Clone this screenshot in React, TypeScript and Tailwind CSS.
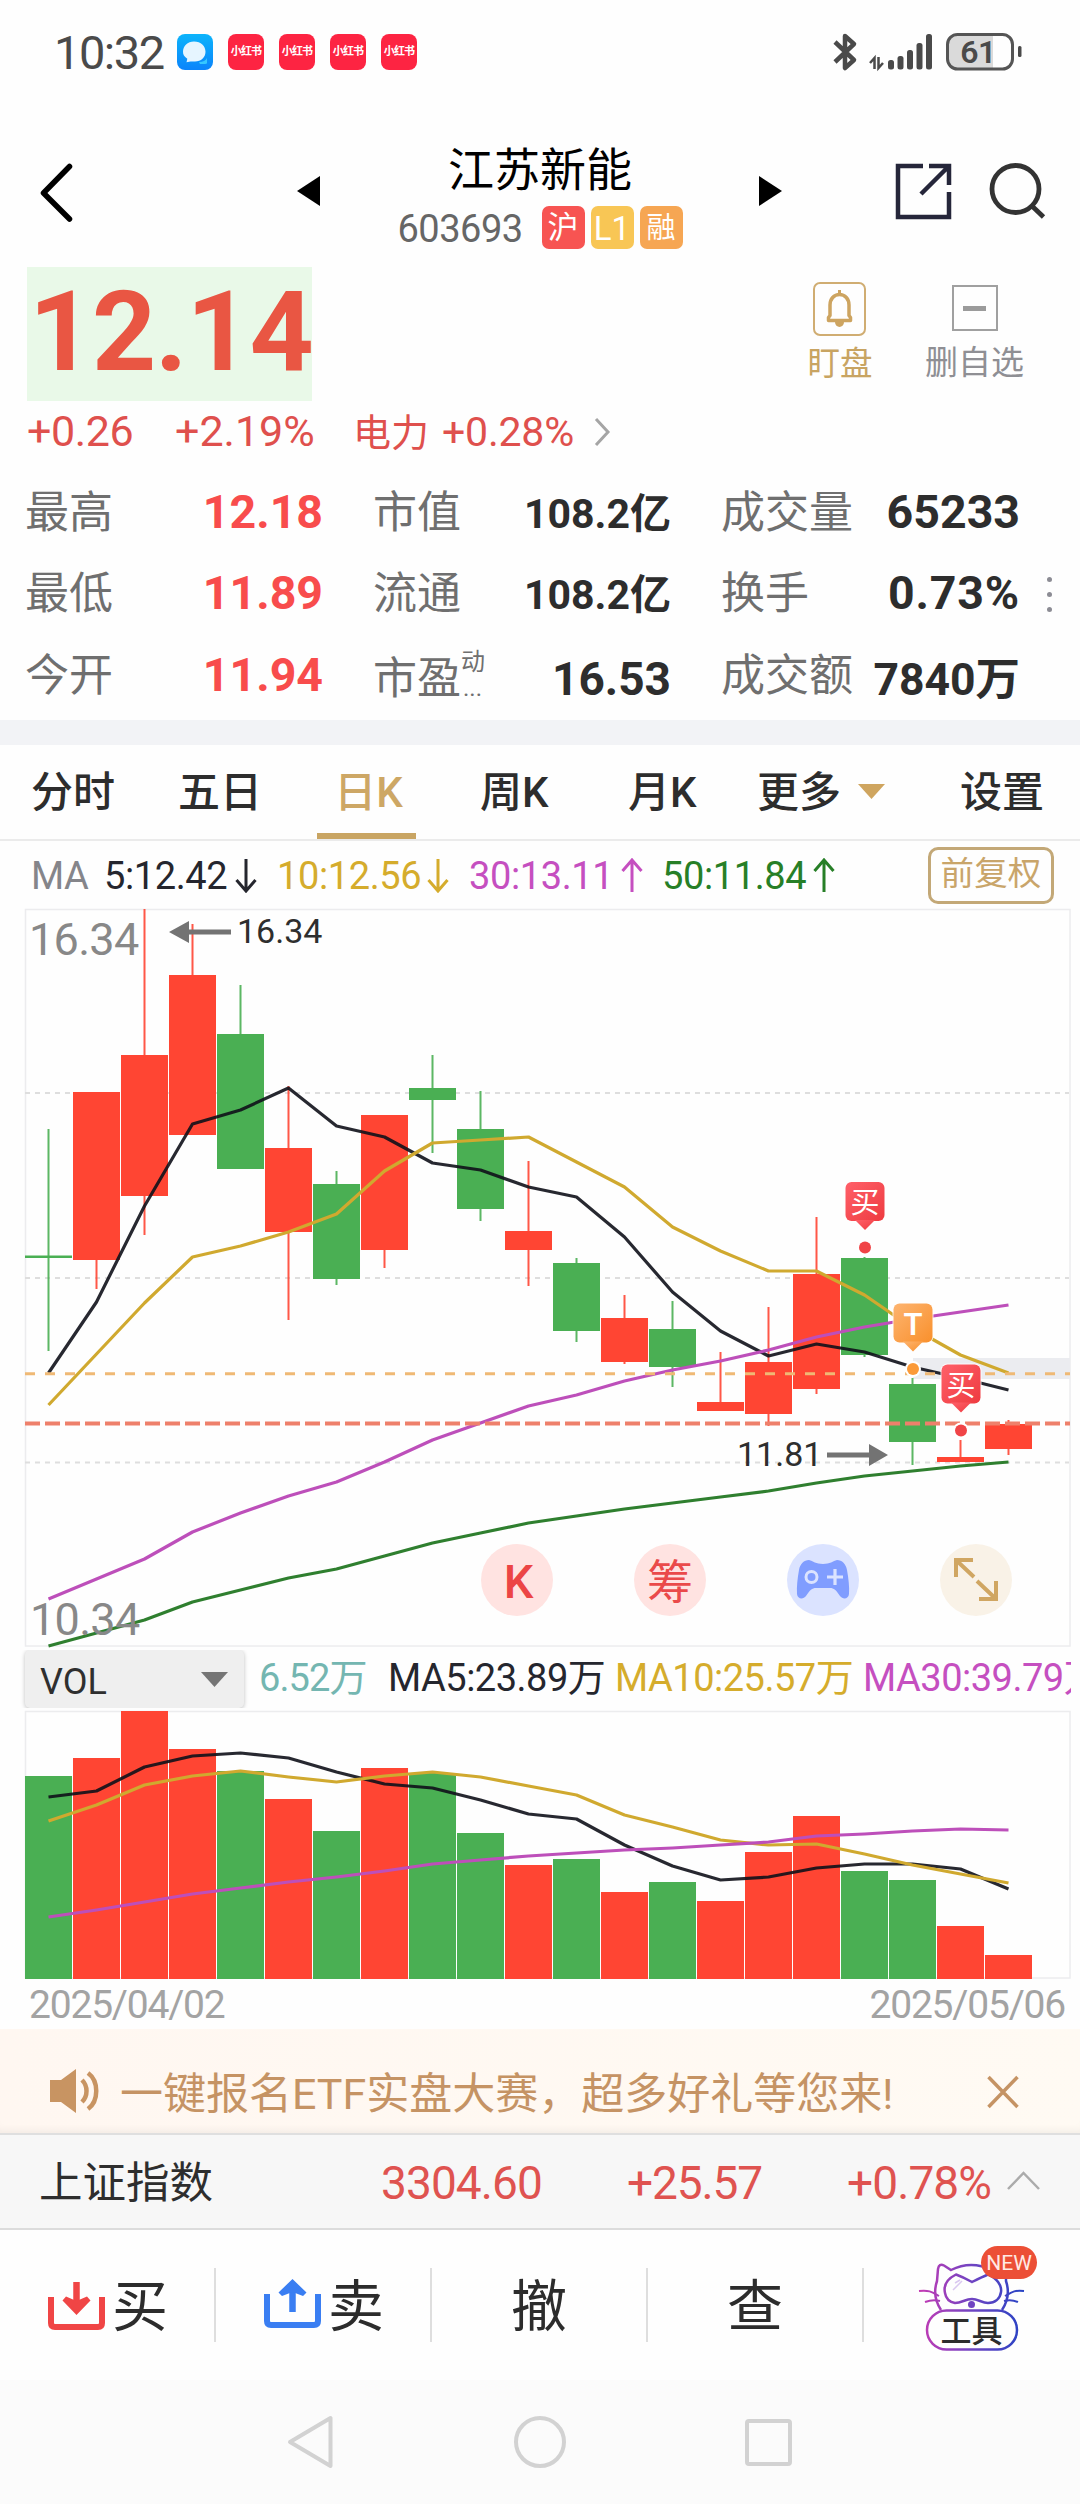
import React from "react";

const RED = "#ff4533";
const GREEN = "#4aaf53";

/* [rising, body top, body bottom, high, low] */
const candles: [boolean, number, number, number, number][] = [
  [false, 1255.5, 1258, 1129, 1351],
  [true, 1092, 1260, 1092, 1289],
  [true, 1055, 1196, 909, 1235],
  [true, 975, 1135, 924, 1135],
  [false, 1034, 1169, 985, 1169],
  [true, 1148, 1232, 1086, 1320],
  [false, 1184, 1279, 1171, 1285],
  [true, 1115, 1250, 1115, 1268],
  [false, 1088, 1100, 1055, 1153],
  [false, 1129, 1209, 1091, 1221],
  [true, 1231, 1250, 1161, 1286],
  [false, 1263, 1331, 1258, 1342],
  [true, 1318, 1362, 1295, 1364],
  [false, 1329, 1367, 1301, 1387],
  [true, 1402, 1411, 1352, 1411],
  [true, 1362, 1414, 1307, 1426],
  [true, 1274, 1389, 1217, 1394],
  [false, 1258, 1355, 1257, 1357],
  [false, 1384, 1442, 1378, 1465],
  [true, 1457, 1462, 1440, 1462],
  [true, 1424, 1449, 1420, 1455],
];
const ma5 = [1373, 1302, 1206, 1124, 1110, 1088, 1126, 1137, 1163, 1170, 1187, 1197, 1237, 1292, 1331, 1356, 1344, 1352, 1367, 1378, 1390];
const ma10 = [1405, 1354, 1303, 1257, 1246, 1232, 1214, 1171, 1143, 1140, 1137, 1162, 1187, 1227, 1251, 1271, 1271, 1295, 1328, 1355, 1373];
const ma30 = [1599, 1579, 1559, 1532, 1513, 1496, 1482, 1462, 1440, 1423, 1406, 1395, 1381, 1370, 1361, 1350, 1337, 1327, 1319, 1312, 1305];
const ma50 = [1646, 1633, 1620, 1602, 1590, 1578, 1569, 1556, 1543, 1533, 1523, 1516, 1509, 1503, 1497, 1491, 1483, 1476, 1471, 1466, 1462];
const volTop = [1776, 1758, 1711, 1749, 1771, 1799, 1831, 1768, 1773, 1833, 1865, 1859, 1892, 1882, 1901, 1852, 1816, 1871, 1880, 1926, 1955];
const v5 = [1797, 1791, 1767, 1756, 1753, 1758, 1772, 1784, 1788, 1800, 1814, 1819, 1845, 1866, 1880, 1877, 1868, 1864, 1864, 1869, 1889];
const v10 = [1821, 1805, 1785, 1776, 1771, 1777, 1782, 1776, 1772, 1777, 1786, 1795, 1815, 1827, 1840, 1845, 1844, 1854, 1865, 1874, 1883];
const v30 = [1917, 1910, 1902, 1894, 1888, 1882, 1877, 1871, 1864, 1860, 1856, 1853, 1850, 1848, 1845, 1842, 1836, 1834, 1831, 1829, 1830];

const toPoints = (ys: number[]) => ys.map((y, i) => `${48.5 + 48 * i},${y}`).join(" ");

function Line({ ys, color }: { ys: number[]; color: string }) {
  return <polyline points={toPoints(ys)} fill="none" stroke={color} strokeWidth={3.2} strokeLinejoin="round" />;
}

function Marker({ x, top, label, dotY, kind }: { x: number; top: number; label: string; dotY: number; kind: "buy" | "t" }) {
  const fill = kind === "buy" ? "url(#buyFill)" : "url(#tFill)";
  const dot = kind === "buy" ? "#f04447" : "#fb9a38";
  return (
    <g>
      <circle cx={x} cy={dotY} r={8} fill="#fff" />
      <circle cx={x} cy={dotY} r={6} fill={dot} />
      <rect x={x - 20.5} y={top - 1} width={41} height={41} rx={7} fill="#fff" opacity={0.8} />
      <rect x={x - 19.5} y={top} width={39} height={39} rx={6} fill={fill} />
      <path d={`M${x - 10} ${top + 38}L${x} ${top + 48}L${x + 10} ${top + 38}Z`} fill={fill} />
      <text x={x} y={top + 31} textAnchor="middle" fontSize={kind === "buy" ? 29 : 31} fontWeight={kind === "buy" ? 400 : 600} fill="#fff">
        {label}
      </text>
    </g>
  );
}

function StatusBar() {
  return (
    <div className="flex h-[104px] shrink-0 items-start pl-[54px]">
      <div className="w-[123px] pt-[29px] text-[47px] leading-[48px] tracking-[-1.5px] text-[#4a4a4a]">10:32</div>
      <div className="flex gap-[15px] pt-[34px]">
        <svg width="36" height="36" viewBox="0 0 36 36">
          <defs>
            <linearGradient id="msg" x1="0" y1="0" x2="0" y2="1">
              <stop offset="0" stopColor="#0cb4fb" />
              <stop offset="1" stopColor="#0b84fb" />
            </linearGradient>
          </defs>
          <rect width="36" height="36" rx="8" fill="url(#msg)" />
          <path d="M22 28q6 0 8-4v5q0 1-2 1h-5z" fill="#36c8ff" />
          <path d="M17 7.500c7 0 11.500 4.500 11.500 10.300S24 27.500 18 27.500h-4.500l-4 .8.800-3.500C7 22.500 6 20.500 6 17.800 6 12 10.500 7.500 17 7.500z" fill="#e6f5ff" />
        </svg>
        {[0, 1, 2, 3].map((i) => (
          <div key={i} className="flex h-[36px] w-[36px] items-center justify-center rounded-[8px] bg-[#fd2442] text-[11px] leading-[36px] font-bold tracking-[-0.8px] whitespace-nowrap text-white">
            小红书
          </div>
        ))}
      </div>
      <svg className="mt-[30px] ml-[412px]" width="194" height="44" viewBox="829 30 194 44">
        <path d="M835 42L854 60L845 68V36L854 44L835 62" fill="none" stroke="#4a4a4a" strokeWidth="4.500" strokeLinejoin="round" />
        <path d="M870 63l4.500-5v11M883 63l-4.500 5v-11" fill="none" stroke="#4a4a4a" strokeWidth="2.500" />
        <g fill="#4a4a4a">
          <rect x="888" y="60" width="6" height="9.500" rx="2.500" />
          <rect x="897.500" y="56" width="6" height="13.500" rx="2.500" />
          <rect x="907" y="50" width="6" height="19.500" rx="2.500" />
          <rect x="916.500" y="43" width="6" height="26.500" rx="2.500" />
          <rect x="926" y="34" width="6" height="35.500" rx="2.500" />
          <rect x="1018" y="46" width="3.500" height="11" rx="1.500" />
        </g>
        <path d="M957 34.500h36v34h-36a9.500 9.500 0 0 1-9.500-9.500v-15a9.500 9.500 0 0 1 9.500-9.500z" fill="#dadada" />
        <rect x="947.500" y="34.500" width="65" height="34.500" rx="10" fill="none" stroke="#555" strokeWidth="3" />
        <text x="978" y="63" textAnchor="middle" fontSize="32" fontWeight="600" letterSpacing="-0.500" fill="#4a4a4a">61</text>
      </svg>
    </div>
  );
}

function Header() {
  return (
    <div className="flex h-[163px] shrink-0 items-start">
      <svg className="mt-[56px] ml-[36px]" width="40" height="64" viewBox="36 160 40 64">
        <path d="M69.500 166.500L43.500 193L69.500 219" fill="none" stroke="#000" strokeWidth="5.500" strokeLinecap="round" strokeLinejoin="round" />
      </svg>
      <svg className="mt-[72px] ml-[221px]" width="23" height="30" viewBox="0 0 23 30"><path d="M0 15L23 0V30Z" /></svg>
      <div className="ml-[60px] flex w-[320px] flex-col items-center">
        <div className="mt-[38px] text-[46px] leading-[56px] text-black">江苏新能</div>
        <div className="mt-[8px] flex h-[43px] items-center gap-[6px]">
          <div className="mt-[3px] w-[138px] text-[38px] leading-[42px] tracking-[-0.5px] text-[#666]">603693</div>
          <div className="h-[43px] w-[43px] rounded-[7px] bg-[#f75452] text-center text-[31px] leading-[44px] text-white">沪</div>
          <div className="h-[43px] w-[43px] rounded-[7px] bg-[#f8c655] text-center text-[33px] leading-[45px] text-white">L1</div>
          <div className="h-[43px] w-[43px] rounded-[7px] bg-[#f6a653] text-center text-[29px] leading-[45px] text-white">融</div>
        </div>
      </div>
      <svg className="mt-[72px] ml-[59px]" width="23" height="30" viewBox="0 0 23 30"><path d="M23 15L0 0V30Z" /></svg>
      <svg className="mt-[56px] ml-[110px]" width="158" height="62" viewBox="892 160 158 62">
        <g fill="none" stroke="#25263a" strokeWidth="4.500">
          <path d="M923 166H898V217H949V192" />
          <path d="M929 166H949V185M949 166L921 194" />
        </g>
        <g fill="none" stroke="#333" strokeWidth="4.800">
          <circle cx="1015.500" cy="189" r="23.500" />
          <path d="M1032 206L1043.500 217" />
        </g>
      </svg>
    </div>
  );
}

function Quote() {
  return (
    <div className="flex h-[134px] shrink-0 items-start pl-[27px]">
      <div className="h-[134px] w-[285px] bg-[#e9f9e8] pl-[2px] text-[112px] leading-[129px] font-bold tracking-[-1.2px] text-[#e95643]">12.14</div>
      <div className="mt-[15px] ml-[489px] flex w-[77px] flex-col items-center">
        <svg width="53" height="54" viewBox="0 0 53 54">
          <rect x="1" y="1" width="51" height="52" rx="6" fill="none" stroke="#d0ad72" strokeWidth="2" />
          <path d="M15.500 38.500v-3l1.500-2V23c0-6 4-10.500 9.500-10.500S36 17 36 23v10.500l1.500 2v3z" fill="none" stroke="#cda460" strokeWidth="3.500" strokeLinejoin="round" />
          <path d="M26.500 8v5" stroke="#cda460" strokeWidth="3" />
          <path d="M22 40h9a4.500 5 0 0 1-9 0z" fill="#cda460" />
        </svg>
        <div className="mt-[10px] pl-[1px] text-[32.500px] leading-[36px] text-[#c8a462]">盯盘</div>
      </div>
      <div className="mt-[18px] ml-[46px] flex w-[101px] flex-col items-center">
        <div className="flex h-[46px] w-[46px] items-center justify-center border-2 border-[#a0a0a0]">
          <div className="h-[5px] w-[23px] bg-[#9b9b9b]" />
        </div>
        <div className="mt-[14px] text-[33px] leading-[36px] text-[#8f8f94]">删自选</div>
      </div>
    </div>
  );
}

function ChangeRow() {
  return (
    <div className="flex h-[69px] shrink-0 items-start pt-[6px] leading-[48px] text-[#df504d]">
      <div className="ml-[27px] w-[148px] text-[43px] tracking-[-0.4px]">+0.26</div>
      <div className="w-[178px] text-[43px]">+2.19%</div>
      <div className="w-[89px] pt-[2px] text-[38px]">电力</div>
      <div className="w-[152px] pt-[1px] text-[41px] tracking-[-0.2px]">+0.28%</div>
      <svg className="mt-[10px]" width="17" height="30" viewBox="0 0 17 30"><path d="M2 2L14 15L2 28" fill="none" stroke="#a5a5a5" strokeWidth="3" /></svg>
    </div>
  );
}

const label = "pt-[2px] text-[44px] text-[#6f6f6f]";
const dark = "ml-auto text-right font-bold text-[#2d2d2d]";
const rise = "ml-auto pt-[1px] text-right text-[46.500px] font-bold text-[#f84c4c]";

function Stats() {
  return (
    <div className="flex h-[250px] shrink-0 pl-[25px] leading-[82px] whitespace-nowrap">
      <div className="flex w-[298px] flex-col">
        {[["最高", "12.18"], ["最低", "11.89"], ["今开", "11.94"]].map(([k, v]) => (
          <div key={k} className="flex h-[81.300px]">
            <span className={label}>{k}</span>
            <span className={rise}>{v}</span>
          </div>
        ))}
      </div>
      <div className="ml-[50px] flex w-[298px] flex-col">
        <div className="flex h-[81.300px]">
          <span className={label}>市值</span>
          <span className={dark + " pt-[3px] text-[41px]"}>108.2亿</span>
        </div>
        <div className="flex h-[81.300px]">
          <span className={label}>流通</span>
          <span className={dark + " pt-[3px] text-[41px]"}>108.2亿</span>
        </div>
        <div className="flex h-[81.300px]">
          <span className="pt-[5px] text-[44px] text-[#6f6f6f]">市盈</span>
          <span className="flex flex-col text-[24px] leading-[26px] text-[#6f6f6f]">
            <span className="pt-[16px]">动</span>
            <span className="pl-[2px]">...</span>
          </span>
          <span className={dark + " pt-[5px] text-[46px]"}>16.53</span>
        </div>
      </div>
      <div className="ml-[50px] flex w-[299px] flex-col">
        <div className="flex h-[81.300px]">
          <span className={label}>成交量</span>
          <span className={dark + " pt-[1px] text-[46.500px]"}>65233</span>
        </div>
        <div className="flex h-[81.300px]">
          <span className={label}>换手</span>
          <span className={dark + " pt-[1px] text-[46.500px] tracking-[0.8px]"}>0.73%</span>
        </div>
        <div className="flex h-[81.300px]">
          <span className={label}>成交额</span>
          <span className={dark + " pt-[6px] text-[44.500px]"}>7840万</span>
        </div>
      </div>
      <div className="ml-[27px] flex flex-col gap-[10px] pt-[107px]">
        {[0, 1, 2].map((i) => <div key={i} className="h-[5px] w-[5px] rounded-full bg-[#8c8c94]" />)}
      </div>
    </div>
  );
}

function Tabs() {
  const tab = "text-[42px] leading-[96px]";
  return (
    <>
      <div className="h-[25px] shrink-0 bg-[#f2f3f6]" />
      <div className="flex h-[96px] shrink-0 border-b-2 border-[#ebebeb] font-medium text-[#2d2d2d]">
        <div className={tab + " ml-[31px] w-[147px]"}>分时</div>
        <div className={tab + " w-[139px]"}>五日</div>
        <div className="flex h-[94px] w-[99px] flex-col items-center border-b-[6px] border-[#c9a563]">
          <div className={tab + " pl-[4px] text-[#cda765]"}>日K</div>
        </div>
        <div className={tab + " ml-[64px] w-[148px]"}>周K</div>
        <div className={tab + " w-[129px]"}>月K</div>
        <div className={tab + " w-[101px]"}>更多</div>
        <svg className="mt-[39px]" width="27" height="15" viewBox="0 0 27 15"><path d="M0 0H27L13.500 15Z" fill="#cfa55f" /></svg>
        <div className={tab + " ml-[75px]"}>设置</div>
      </div>
    </>
  );
}

function Arrow({ up, color }: { up?: boolean; color: string }) {
  return (
    <svg className="mt-[1px] shrink-0" width="22" height="35" viewBox="0 0 22 35">
      <path d={up ? "M11 34V2M1.500 13L11 2L20.500 13" : "M11 1V33M1.500 22L11 33L20.500 22"} fill="none" stroke={color} strokeWidth="3" />
    </svg>
  );
}

function MaRow() {
  return (
    <div className="flex h-[64px] shrink-0 items-start pt-[16px] text-[38px] leading-[38px] tracking-[-0.4px] whitespace-nowrap">
      <div className="ml-[31px] w-[73px] text-[#85858a]">MA</div>
      <div className="w-[131px] text-[#25262e]">5:12.42</div>
      <Arrow color="#25262e" />
      <div className="ml-[20px] w-[150px] text-[#d5ac2c]">10:12.56</div>
      <Arrow color="#d5ac2c" />
      <div className="ml-[20px] w-[152px] text-[#c54fc0]">30:13.11</div>
      <Arrow up color="#c54fc0" />
      <div className="ml-[19px] w-[151px] text-[#277f27]">50:11.84</div>
      <Arrow up color="#277f27" />
      <div className="mt-[-10px] ml-[93px] h-[57px] w-[126px] rounded-[10px] border-[3px] border-[#c3a877] text-center text-[33.500px] leading-[47px] tracking-[0.2px] text-[#c9a56a]">前复权</div>
    </div>
  );
}

function PriceChart() {
  return (
    <svg className="block shrink-0" width="1080" height="745" viewBox="0 905 1080 745">
      <defs>
        <linearGradient id="buyFill" x1="0" y1="0" x2="1" y2="1">
          <stop offset="0" stopColor="#ff6069" />
          <stop offset="1" stopColor="#ee3b40" />
        </linearGradient>
        <linearGradient id="tFill" x1="0" y1="0" x2="1" y2="1">
          <stop offset="0" stopColor="#fdb470" />
          <stop offset="1" stopColor="#f9902c" />
        </linearGradient>
      </defs>
      <rect x="25.500" y="909.500" width="1044.500" height="736.500" fill="none" stroke="#ececee" strokeWidth="1.500" />
      {[1093, 1278, 1462.5].map((y) => (
        <path key={y} d={`M25 ${y}H1069`} stroke="#dedede" strokeWidth="2" strokeDasharray="5 5" />
      ))}
      <rect x="913" y="1358" width="157" height="21" fill="#ebecf0" />
      {candles.map(([up, top, bottom, high, low], i) => (
        <g key={i} fill={up ? RED : GREEN}>
          <rect x={47.5 + 48 * i} y={high} width="2" height={low - high} opacity="0.9" />
          <rect x={25 + 48 * i} y={top} width="47" height={bottom - top} />
        </g>
      ))}
      <Line ys={ma5} color="rgba(16,17,26,0.9)" />
      <Line ys={ma10} color="#d0a92f" />
      <Line ys={ma30} color="#bd4fba" />
      <Line ys={ma50} color="#2f7f2f" />
      <path d="M25 1373.700H1070" stroke="#efb975" strokeWidth="3" strokeDasharray="10 10" />
      <path d="M25 1423.500H1070" stroke="#ee806b" strokeWidth="4" strokeDasharray="15 5" />
      <Marker x={865} top={1182} label="买" dotY={1247.5} kind="buy" />
      <Marker x={913} top={1303.5} label="T" dotY={1369} kind="t" />
      <Marker x={961} top={1364.5} label="买" dotY={1430.5} kind="buy" />
      <text x="29" y="955" fontSize="45" letterSpacing="-0.700" fill="#888">16.34</text>
      <text x="30" y="1635" fontSize="45" letterSpacing="-0.700" fill="#888">10.34</text>
      <g fill="#2e2e2e" fontSize="34">
        <text x="237" y="943">16.34</text>
        <text x="737" y="1466">11.81</text>
      </g>
      <g stroke="#737373" strokeWidth="5">
        <path d="M186 932H231M827 1455H872" />
        <path d="M169 932L189 921V943ZM888 1455L869 1444V1466Z" fill="#737373" stroke="none" />
      </g>
      <circle cx="517" cy="1580" r="36" fill="#ffe3e1" />
      <circle cx="670" cy="1580" r="36" fill="#ffe3e1" />
      <circle cx="823" cy="1580" r="36" fill="#dbe3ff" />
      <circle cx="976" cy="1580" r="36" fill="#f9f2e7" />
      <text x="518.500" y="1597.500" textAnchor="middle" fontSize="47" fontWeight="500" fill="#ec4545">K</text>
      <text x="670" y="1598" textAnchor="middle" fontSize="46" fill="#ea4a4a">筹</text>
      <path d="M809 1560c4 1 7 4 14 4s10-3 14-4c5 0 9 4 10 10 1.500 8 2.500 17 2 24-.500 5-6 6-9 2-4-6-6-8-10-8h-14c-4 0-6 2-10 8-3 4-8.500 3-9-2-.500-7 .500-16 2-24 1-6 5-10 10-10z" fill="#809dff" />
      <circle cx="811.500" cy="1577" r="5.500" fill="none" stroke="#dbe3ff" strokeWidth="3" />
      <path d="M827 1577H843M835 1569V1585" stroke="#dbe3ff" strokeWidth="3.200" />
      <path d="M973 1560H956V1577M956.500 1560.500L974 1577M979 1599H996V1581M995.500 1598.500L977 1581" fill="none" stroke="#d0a662" strokeWidth="4" />
    </svg>
  );
}

function VolumeHeader() {
  return (
    <div className="flex h-[58px] w-[1071px] shrink-0 items-start overflow-hidden pl-[25px] text-[38px] leading-[56px] tracking-[-0.5px] whitespace-nowrap">
      <div className="flex h-[58px] w-[219px] shrink-0 items-start rounded-[5px] bg-[#efefef] pl-[15px] shadow-[0_1px_4px_rgba(0,0,0,0.25)]">
        <div className="w-[161px] pt-[4px] text-[36px] tracking-normal text-[#2f2f2f]">VOL</div>
        <svg className="mt-[22px]" width="27" height="15" viewBox="0 0 27 15"><path d="M0 0H27L13.500 15Z" fill="#757575" /></svg>
      </div>
      <div className="ml-[15px] w-[129px] shrink-0 tracking-[-0.9px] text-[#74b6b1]">6.52万</div>
      <div className="w-[227px] shrink-0 text-[#25262e]">MA5:23.89万</div>
      <div className="w-[248px] shrink-0 text-[#d5ac2c]">MA10:25.57万</div>
      <div className="shrink-0 text-[#c54fc0]">MA30:39.79万</div>
    </div>
  );
}

function VolumeChart() {
  return (
    <svg className="block shrink-0" width="1080" height="273" viewBox="0 1708 1080 273">
      <rect x="25.500" y="1711.500" width="1044.500" height="266.500" fill="none" stroke="#ececee" strokeWidth="1.500" />
      {volTop.map((y, i) => (
        <rect key={i} x={25 + 48 * i} y={y} width="47" height={1979 - y} fill={candles[i][0] ? RED : GREEN} />
      ))}
      <Line ys={v5} color="rgba(16,17,26,0.9)" />
      <Line ys={v10} color="#d0a92f" />
      <Line ys={v30} color="#bd4fba" />
    </svg>
  );
}

function Banner() {
  return (
    <div className="flex h-[106px] shrink-0 items-start border-b-2 border-[#dfdfdf] bg-gradient-to-r from-[#fff7f1] to-[#fffaf3] pl-[50px] shadow-[inset_0_-8px_8px_-6px_rgba(0,0,0,0.06)]">
      <svg className="mt-[40px]" width="52" height="44" viewBox="0 0 52 44">
        <path d="M0 11H11L26 0V44L11 33H0Z" fill="#c89462" />
        <path d="M32 11c6 6 6 16 0 22M38 4c11 8 11 28 0 36" fill="none" stroke="#c89462" strokeWidth="4.500" />
      </svg>
      <div className="ml-[18px] w-[867px] pt-[35px] text-[43px] leading-[60px] whitespace-nowrap text-[#c59364]">一键报名ETF实盘大赛，超多好礼等您来!</div>
      <svg className="mt-[46px]" width="32" height="34" viewBox="0 0 32 34"><path d="M1.500 2L30.500 32M30.500 2L1.500 32" stroke="#c59364" strokeWidth="3.500" /></svg>
    </div>
  );
}

function IndexBar() {
  return (
    <div className="flex h-[95px] shrink-0 items-start border-b-2 border-[#dcdcdc] bg-[#f7f7f7] text-[46px] leading-[96px] whitespace-nowrap text-[#df5350]">
      <div className="ml-[39px] w-[342px] pt-[1px] text-[43.500px] text-[#2e2e2e]">上证指数</div>
      <div className="w-[246px] tracking-[-0.9px]">3304.60</div>
      <div className="w-[220px] tracking-[-1.1px]">+25.57</div>
      <div className="w-[160px] tracking-[-0.9px]">+0.78%</div>
      <svg className="mt-[36px]" width="33" height="20" viewBox="0 0 33 20"><path d="M1 18L16.500 2L32 18" fill="none" stroke="#ababab" strokeWidth="2.500" /></svg>
    </div>
  );
}

function ActionBar() {
  const cell = "flex h-[74px] w-[216px] items-center border-r-2 border-[#dedede] text-[56px] leading-[74px] text-[#2c2c2c]";
  return (
    <div className="flex h-[150px] shrink-0 items-start pt-[38px]">
      <div className={cell + " pl-[48px]"}>
        <svg className="mt-[1px] mr-[7px]" width="57" height="48" viewBox="0 0 57 48">
          <path d="M3 15V41Q3 45 7 45H50Q54 45 54 41V15" fill="none" stroke="#f04545" strokeWidth="6" />
          <path d="M28.500 0V22" stroke="#f04545" strokeWidth="6.500" />
          <path d="M18 14.500L28.500 19L39 14.500L42.500 18.500L28.500 33L14.500 18.500Z" fill="#f04545" />
        </svg>
        <span className="pt-[3px]">买</span>
      </div>
      <div className={cell + " pl-[48px]"}>
        <svg className="mt-[-3px] mr-[7px]" width="57" height="49" viewBox="0 0 57 49">
          <path d="M3 15V42Q3 46 7 46H50Q54 46 54 42V15" fill="none" stroke="#3a7ef2" strokeWidth="6" />
          <path d="M28.500 8V33" stroke="#3a7ef2" strokeWidth="6.500" />
          <path d="M28.500 0L42.500 13.500L39 17L28.500 13L18 17L14.500 13.500Z" fill="#3a7ef2" />
        </svg>
        <span className="pt-[3px]">卖</span>
      </div>
      <div className={cell + " justify-center"}><span className="pt-[3px]">撤</span></div>
      <div className={cell + " justify-center"}><span className="pt-[3px]">查</span></div>
      <svg className="mt-[-24px] ml-[50px]" width="130" height="112" viewBox="914 2244 130 112">
        <defs>
          <linearGradient id="cat" x1="920" y1="0" x2="1022" y2="0" gradientUnits="userSpaceOnUse">
            <stop offset="0" stopColor="#c43bb4" />
            <stop offset="0.500" stopColor="#7044c2" />
            <stop offset="1" stopColor="#2843c4" />
          </linearGradient>
        </defs>
        <g fill="none" stroke="url(#cat)" strokeWidth="2.500">
          <path d="M941 2310C935 2301 934 2290 937 2281L938 2269Q939 2263 944 2265.500L951 2270Q971 2260 992 2270L1001 2267Q1006 2266 1006 2270V2281C1009 2290 1008 2301 1002 2310" />
          <path d="M945 2293C943 2284 949 2278 956 2274.500Q963 2277 972 2282Q982 2277 988 2274.500C997 2278 1002 2286 1001 2292C1000 2299 995 2303 988 2303C982 2303 978 2299 972 2299C965 2299 962 2303 955 2303C949 2302 946 2299 945 2293Z" />
          <path d="M939 2296C932 2292 930 2290 919 2291M940 2301Q933 2299 925 2302M1005 2296C1012 2292 1014 2290 1024 2291M1004 2301Q1011 2299 1018 2302" strokeWidth="2" />
          <rect x="927" y="2310.500" width="90" height="39" rx="19.500" />
        </g>
        <circle cx="971.500" cy="2304.500" r="3.500" fill="#7044c2" />
        <path d="M955 2283L960 2280M953 2290L962 2281" stroke="#d9c8f0" strokeWidth="1.500" />
        <text x="971.500" y="2341.500" textAnchor="middle" fontSize="31" fontWeight="500" fill="#2c2c2c">工具</text>
        <rect x="981" y="2246" width="56" height="33" rx="16.500" fill="#ec4f36" />
        <text x="1009" y="2270" textAnchor="middle" fontSize="21" fill="#ffe9e4">NEW</text>
      </svg>
    </div>
  );
}

function SystemNav() {
  return (
    <div className="flex h-[124px] shrink-0 items-start bg-[#fbfbfb] pt-[35px]">
      <svg className="ml-[287px]" width="46" height="54" viewBox="0 0 46 54"><path d="M43.500 3V51L3 27Z" fill="none" stroke="#d2d2d2" strokeWidth="4" strokeLinejoin="round" /></svg>
      <svg className="ml-[180px]" width="54" height="54" viewBox="0 0 54 54"><circle cx="27" cy="27" r="24" fill="none" stroke="#d2d2d2" strokeWidth="4" /></svg>
      <div className="mt-[4px] ml-[178px] h-[47px] w-[47px] rounded-[4px] border-4 border-[#d2d2d2]" />
    </div>
  );
}

export default function App() {
  return (
    <div className="flex h-[2504px] w-[1080px] flex-col overflow-hidden bg-[#fefefe] font-[Roboto,'Noto_Sans_CJK_SC',sans-serif]">
      <StatusBar />
      <Header />
      <Quote />
      <ChangeRow />
      <Stats />
      <Tabs />
      <MaRow />
      <PriceChart />
      <VolumeHeader />
      <VolumeChart />
      <div className="flex h-[48px] shrink-0 justify-between pr-[15px] pl-[29px] text-[39px] leading-[49px] tracking-[-1.2px] text-[#a3a3a3]">
        <span>2025/04/02</span>
        <span>2025/05/06</span>
      </div>
      <Banner />
      <IndexBar />
      <ActionBar />
      <SystemNav />
    </div>
  );
}
